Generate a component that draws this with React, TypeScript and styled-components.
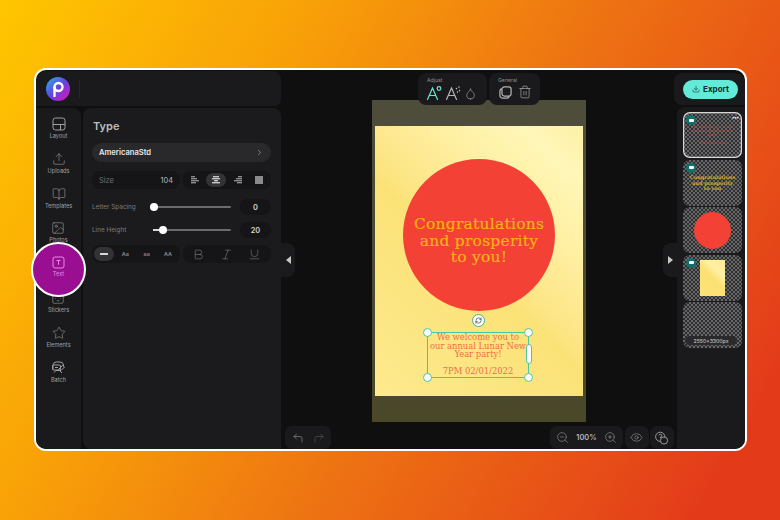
import React from "react";
import styled, { createGlobalStyle } from "styled-components";
import { Upload, BookOpen, Image, Sticker, Star, ChevronRight, Trash2, Droplet, ZoomIn, ZoomOut, Eye, RefreshCw, Download, CornerUpLeft, CornerUpRight, Bold, Italic, Underline } from "lucide-react";

const Global = createGlobalStyle`
  html, body { margin: 0; padding: 0; }
  body { font-family: "Inter", "Liberation Sans", sans-serif; }
  * { box-sizing: border-box; }
`;

const Stage = styled.div`
  width: 780px; height: 520px; padding: 68px 0 0 34px; overflow: hidden;
  background: linear-gradient(120deg, #ffc600 0%, #f89f08 30%, #ee7512 55%, #e33b1a 92%);
`;
const Win = styled.div`
  width: 713px; height: 383px; border: 2px solid #fff; border-radius: 12px; background: #0f0f10;
  display: grid; grid-template-columns: 245px 393px 1fr; position: relative;
`;
const LeftCol = styled.div`
  display: flex; flex-direction: column; gap: 2px; padding-top: 1px;
`;
const TopBar = styled.div`
  height: 35px; background: #1a1a1c; border-radius: 10px 8px 6px 0; display: flex; align-items: center; padding-left: 10px; gap: 9px;
`;
const Logo = styled.div`
  width: 24px; height: 24px; border-radius: 50%; display: flex; align-items: center; justify-content: center;
  background: linear-gradient(135deg, #1fb8ea 0%, #6a3fe0 50%, #e414b0 100%);
`;
const Divider = styled.div`width: 1px; height: 18px; background: #26262a;`;
const Lower = styled.div`flex: 1; display: flex; gap: 2px; min-height: 0;`;
const Sidebar = styled.div`
  width: 45px; background: #1a1a1c; border-radius: 0 8px 0 10px; display: flex; flex-direction: column; align-items: center; padding-top: 9px; gap: 8.75px;
`;
const NavItem = styled.div`
  position: relative; width: 45px; height: 26px; display: flex; flex-direction: column; align-items: center; gap: 2px;
  color: #a0a0a0; font-size: 5.6px; line-height: 7px; font-weight: 400;
  svg { display: block; flex: none; }
`;
const Spotlight = styled.div`
  position: absolute; left: -5px; top: -14px; width: 55px; height: 55px; border-radius: 50%;
  background: #9a0f92; border: 2px solid #fff; z-index: 3;
`;
const NavContent = styled.div<{ $active?: boolean }>`
  display: flex; flex-direction: column; align-items: center; gap: 2px; position: relative;
  z-index: ${p => (p.$active ? 4 : 1)};
  color: ${p => (p.$active ? "#e58be0" : "inherit")};
`;
const Panel = styled.div`
  width: 198px; background: #1b1b1d; border-radius: 8px 8px 0 8px; padding: 11px 10px 0 9px; display: flex; flex-direction: column;
`;
const Heading = styled.div`font-size: 11px; line-height: 14px; font-weight: 600; color: #bdbdbd; margin-bottom: 10px; padding-left: 1px;`;
const FontRow = styled.div`
  height: 19px; border-radius: 10px; background: #29292b; color: #e8e8e8; font-size: 7.6px; font-weight: 600;
  display: flex; align-items: center; justify-content: space-between; padding: 0 7px; margin-bottom: 9px;
`;
const TwoBoxes = styled.div`display: grid; grid-template-columns: 88px 88px; gap: 3px;`;
const Box = styled.div`
  height: 18px; border-radius: 8px; background: #151517; display: flex; align-items: center; justify-content: space-between; padding: 0 7px;
  color: #6f6f6f; font-size: 7.4px;
`;
const SizeValue = styled.span`color: #b5b5b5;`;
const Seg = styled.div<{ $on?: boolean }>`
  width: 20px; height: 14px; border-radius: 7px; display: flex; align-items: center; justify-content: center;
  background: ${p => (p.$on ? "#333336" : "transparent")}; color: ${p => (p.$on ? "#c8c8c8" : "#8a8a8a")};
  font-size: 5.4px; font-weight: 600;
`;
const DashMark = styled.span`width: 8px; height: 1.4px; background: #d8d8d8;`;
const SegBox = styled(Box)`padding: 0 2px;`;
const SliderRow = styled.div<{ $mt: number }>`
  display: grid; grid-template-columns: 61px 78px 31px; align-items: center; height: 16px; margin-top: ${p => p.$mt}px;
  color: #7a7a7a; font-size: 6.4px;
`;
const Track = styled.div`position: relative; height: 2px; background: #6b6b6b; border-radius: 1px;`;
const TrackFill = styled.div`position: absolute; left: 0; top: 0; height: 2px; background: #d8d8d8;`;
const Thumb = styled.div`
  position: absolute; top: -3px; width: 8px; height: 8px; border-radius: 50%; background: #fff; margin-left: -4px;
`;
const ValuePill = styled.div`
  margin-left: 9px; width: 31px; height: 16px; border-radius: 8px; background: #151517; color: #d2d2d2; font-size: 7.4px; font-weight: 600;
  display: flex; align-items: center; justify-content: center;
`;
const RowLast = styled(TwoBoxes)`margin-top: 7px;`;
const Center = styled.div`
  position: relative; display: flex; flex-direction: column; align-items: center; padding-top: 3px; padding-left: 3px;
`;
const ToolsRow = styled.div`
  display: flex; gap: 2px; height: 32px; margin-bottom: -5px; position: relative; z-index: 2;
`;
const ToolGroup = styled.div<{ $w: number }>`
  width: ${p => p.$w}px; height: 32px; background: #1a1a1c; border-radius: 8px; padding: 4px 0 0 9px; color: #8e8e8e;
  font-size: 5.2px; line-height: 6px;
`;
const ToolIcons = styled.div<{ $gap: number; $ml: number }>`
  display: flex; gap: ${p => p.$gap}px; align-items: center; margin-top: 2px; margin-left: ${p => p.$ml}px;
`;
const Artboard = styled.div`
  width: 214px; height: 322px; padding-top: 26px; display: flex; justify-content: center;
  background: linear-gradient(180deg, #4e4d3b, #4a4829);
`;
const Page = styled.div`
  width: 208px; height: 270px; display: flex; flex-direction: column; align-items: center; padding-top: 33px;
  background: linear-gradient(43deg, #fdea8e 0%, #fbe277 47%, #fde688 54%, #fff0a4 72%, #fff7b8 88%, #fef1a6 100%);
`;
const Circle = styled.div`
  width: 152px; height: 152px; border-radius: 50%; background: #f34135; flex: none; display: flex; flex-direction: column; align-items: center; justify-content: center;
  color: #fbb215; font-family: "DejaVu Serif", serif; font-size: 15.4px; line-height: 16.5px; letter-spacing: 0.3px; text-align: center; padding-top: 12px;
  -webkit-text-stroke: 0.2px #fbb215;
`;
const Rotate = styled.div`
  width: 13px; height: 13px; border-radius: 50%; background: #fff; border: 1.5px solid #36b6a4; margin: 3px 2px 0 0; display: flex; align-items: center; justify-content: center; color: #222; flex: none;
`;
const TextBox = styled.div`
  position: relative; width: 102px; height: 46px; margin: 5px 2px 0 0; border: 1.5px solid #4cc4a6; flex: none;
  color: #ec6e4a; font-family: "DejaVu Serif", serif; font-size: 8.4px; line-height: 8.6px; text-align: center; white-space: nowrap;
`;
const Handle = styled.div<{ $x: "left" | "right"; $y: "top" | "bottom" }>`
  position: absolute; ${p => p.$x}: -5.2px; ${p => p.$y}: -5.2px; width: 9px; height: 9px; border-radius: 50%; background: #fff; border: 1.6px solid #4cc4a6;
`;
const SideGrip = styled.div`
  position: absolute; right: -3.5px; top: 11px; width: 6px; height: 20px; border-radius: 3px; background: #fff; border: 1.5px solid #4cc4a6;
`;
const BottomBar = styled.div`
  align-self: stretch; margin-top: 4px; margin-left: -3px; display: flex; justify-content: space-between; padding-left: 4px;
`;
const BottomGroup = styled.div`display: flex; gap: 1.5px;`;
const BottomChip = styled.div<{ $w: number }>`
  width: ${p => p.$w}px; height: 23px; background: #1a1a1c; border-radius: 7px; display: flex; align-items: center; justify-content: space-around; color: #9a9a9a; font-size: 7.4px; font-weight: 600; padding: 0 2px;
`;
const ZoomLabel = styled.span`color: #b5b5b5;`;
const Collapse = styled.div<{ $side: "left" | "right" }>`
  position: absolute; ${p => p.$side}: ${p => (p.$side === "left" ? "0" : "-3px")}; top: 173px; width: 14px; height: 34px; background: #1a1a1c;
  border-radius: ${p => (p.$side === "left" ? "0 8px 8px 0" : "8px 0 0 8px")}; display: flex; align-items: center; justify-content: center;
`;
const Arrow = styled.div<{ $dir: "left" | "right" }>`
  width: 0; height: 0; border-top: 4px solid transparent; border-bottom: 4px solid transparent;
  ${p => (p.$dir === "left" ? "border-right: 5px solid #c8c8c8;" : "border-left: 5px solid #c8c8c8;")}
`;
const RightCol = styled.div`display: flex; flex-direction: column; align-items: flex-end; gap: 2px; padding-top: 3px;`;
const ExportBar = styled.div`
  width: 71px; height: 32px; background: #1a1a1c; border-radius: 8px 10px 0 8px; display: flex; align-items: center; padding-left: 9px;
`;
const ExportBtn = styled.div`
  width: 55px; height: 19px; border-radius: 10px; background: #62ebd9; color: #15282a; font-size: 8px; font-weight: 700;
  display: flex; align-items: center; justify-content: center; gap: 3px;
`;
const Thumbs = styled.div`
  width: 68px; flex: 1; background: #1a1a1c; border-radius: 8px 0 10px 0; padding: 5px 3px 0 6px; display: flex; flex-direction: column; gap: 1.5px;
`;
const Thumb2 = styled.div<{ $sel?: boolean }>`
  position: relative; height: 46px; border-radius: 7px; overflow: hidden; flex: none; display: flex; align-items: center; justify-content: center; text-align: center;
  background: repeating-conic-gradient(#666 0 25%, #2f2f31 0 50%) 0 0 / 4px 4px;
  ${p => p.$sel && "box-shadow: inset 0 0 0 1.2px #d8d8d8;"}
`;
const Badge = styled.div`
  position: absolute; left: 3px; top: 3px; width: 10px; height: 10px; border-radius: 50%; background: #136f6c; display: flex; align-items: center; justify-content: center;
  &::after { content: ""; width: 5px; height: 3px; border-radius: 1px; background: #fff; }
`;
const Dots = styled.div`
  position: absolute; right: 3px; top: 2px; color: #fff; font-size: 5px; line-height: 6px; font-weight: 700;
`;
const TinyRed = styled.div`color: #c04a40; font-family: "DejaVu Serif", serif; font-size: 3.4px; line-height: 4px; width: 50px;`;
const TinyYellow = styled.div`color: #d6a82a; font-family: "DejaVu Serif", serif; font-size: 5px; line-height: 5.4px; font-weight: 700; margin-top: 2px; white-space: nowrap;`;
const MiniCircle = styled.div`width: 37px; height: 37px; border-radius: 50%; background: #f34135;`;
const MiniPage = styled.div`width: 25px; height: 36px; background: linear-gradient(43deg, #fbe27a, #fbe173 50%, #fff0a4 70%, #fdea90);`;
const SizePill = styled.div`
  position: absolute; left: 2px; right: 5px; bottom: 3px; height: 9px; border-radius: 5px; background: #2a2a2c; color: #d0d0d0; font-size: 5.2px; display: flex; align-items: center; justify-content: center;
`;

const LayoutIcon = () => (
  <svg width="14" height="14" viewBox="0 0 14 14" fill="none" stroke="currentColor" strokeWidth="1">
    <rect x="1" y="1" width="12" height="12" rx="2.5" /><path d="M1 7.5h12M8.5 7.5V13" />
  </svg>
);
const TextIcon = () => (
  <svg width="13" height="13" viewBox="0 0 13 13" fill="none" stroke="currentColor" strokeWidth="1">
    <rect x="1" y="1" width="11" height="11" rx="2" /><path d="M4.5 4.5h4M6.5 4.5v4.3" />
  </svg>
);
const BatchIcon = () => (
  <svg width="15" height="15" viewBox="0 0 15 15" fill="none" stroke="currentColor" strokeWidth="1">
    <path d="M2 9.5V5a3.5 3.5 0 0 1 3.5-3H9a3.5 3.5 0 0 1 3.5 3v1" />
    <rect x="1.5" y="5" width="8" height="5" rx="1" /><path d="M3 12.5l2-2h5l3.5-3.5-2-1.5-5 5" /><path d="M4 7.5h3M9 11l2 2" />
  </svg>
);
const AlignIcon = ({ kind }: { kind: "l" | "c" | "r" }) => {
  const rows: [number, number][] = kind === "l" ? [[1, 4], [1, 6], [1, 8], [1, 5]] : kind === "c" ? [[2, 6], [1, 8], [3, 4], [1, 8]] : [[5, 4], [3, 6], [1, 8], [4, 5]];
  return (
    <svg width="10" height="10" viewBox="0 0 10 10" fill="currentColor">
      {rows.map(([x, w], i) => <rect key={i} x={x} y={1 + i * 2} width={w} height={1.4} />)}
    </svg>
  );
};
const SolidAlign = () => (
  <svg width="10" height="10" viewBox="0 0 10 10" fill="currentColor"><rect x="1" y="1" width="8" height="8" /></svg>
);
const AdjustA = ({ color, extra }: { color: string; extra: "ring" | "spark" }) => (
  <svg width="16" height="16" viewBox="0 0 16 16" fill="none" stroke={color} strokeWidth="1.2" strokeLinecap="round">
    <path d="M1.5 14.5L6.5 3l5 11.5M3.3 10.5h6.4" />
    {extra === "ring" ? <circle cx="13" cy="3.5" r="1.8" /> : <path d="M11.5 3.5v.1M14 2v.1M14.5 5.5v.1M12.5 7v.1" strokeWidth="1.6" />}
  </svg>
);
const DuplicateIcon = () => (
  <svg width="13" height="13" viewBox="0 0 14 14" fill="none" stroke="#b5b5b5" strokeWidth="1.3">
    <rect x="3.2" y="1" width="9.8" height="9.8" rx="2.4" /><path d="M3.2 3A2.4 2.4 0 0 0 1 5.4v5.2A2.4 2.4 0 0 0 3.4 13h5.2A2.4 2.4 0 0 0 11 10.8" />
  </svg>
);
const HelpIcon = () => (
  <svg width="14" height="14" viewBox="0 0 14 14" fill="none" stroke="currentColor" strokeWidth="1">
    <path d="M9.8 6.2A4.6 4.6 0 1 0 5.2 10.4" /><circle cx="9" cy="9.5" r="3.6" /><path d="M4 4.4A1.4 1.4 0 1 1 5.4 6v1M5.4 8.3v.1" />
  </svg>
);

const nav = [
  { label: "Layout", icon: <LayoutIcon /> },
  { label: "Uploads", icon: <Upload size={14} strokeWidth={1} /> },
  { label: "Templates", icon: <BookOpen size={14} strokeWidth={1} /> },
  { label: "Photos", icon: <Image size={14} strokeWidth={1} /> },
  { label: "Text", icon: <TextIcon />, active: true },
  { label: "Stickers", icon: <Sticker size={14} strokeWidth={1} /> },
  { label: "Elements", icon: <Star size={14} strokeWidth={1} /> },
  { label: "Batch", icon: <BatchIcon /> },
];

export default function App() {
  return (
    <Stage>
      <Global />
      <Win>
        <LeftCol>
          <TopBar>
            <Logo>
              <svg width="14" height="16" viewBox="0 0 14 16" fill="none" stroke="#fff" strokeWidth="2.4"><circle cx="7.5" cy="6" r="4" /><path d="M3.5 6v9" strokeLinecap="round" /></svg>
            </Logo>
            <Divider />
          </TopBar>
          <Lower>
            <Sidebar>
              {nav.map(n => (
                <NavItem key={n.label}>
                  {n.active && <Spotlight />}
                  <NavContent $active={n.active}>{n.icon}<span>{n.label}</span></NavContent>
                </NavItem>
              ))}
            </Sidebar>
            <Panel>
              <Heading>Type</Heading>
              <FontRow>AmericanaStd<ChevronRight size={9} color="#9a9a9a" /></FontRow>
              <TwoBoxes>
                <Box>Size<SizeValue>104</SizeValue></Box>
                <SegBox>
                  <Seg><AlignIcon kind="l" /></Seg>
                  <Seg $on><AlignIcon kind="c" /></Seg>
                  <Seg><AlignIcon kind="r" /></Seg>
                  <Seg><SolidAlign /></Seg>
                </SegBox>
              </TwoBoxes>
              <SliderRow $mt={10}>
                <span>Letter Spacing</span>
                <Track><Thumb style={{ left: "1%" }} /></Track>
                <ValuePill>0</ValuePill>
              </SliderRow>
              <SliderRow $mt={7}>
                <span>Line Height</span>
                <Track><TrackFill style={{ width: "12%" }} /><Thumb style={{ left: "13%" }} /></Track>
                <ValuePill>20</ValuePill>
              </SliderRow>
              <RowLast>
                <SegBox>
                  <Seg $on><DashMark /></Seg><Seg>Aa</Seg><Seg>aa</Seg><Seg>AA</Seg>
                </SegBox>
                <Box>
                  <Bold size={13} strokeWidth={1} color="#8a8a8a" style={{ marginLeft: 2 }} />
                  <Italic size={13} strokeWidth={1} color="#8a8a8a" />
                  <Underline size={13} strokeWidth={1} color="#8a8a8a" style={{ marginRight: 3 }} />
                </Box>
              </RowLast>
            </Panel>
          </Lower>
        </LeftCol>

        <Center>
          <Collapse $side="left"><Arrow $dir="left" /></Collapse>
          <ToolsRow>
            <ToolGroup $w={69}>
              Adjust
              <ToolIcons $gap={3} $ml={-1}>
                <AdjustA color="#6fe3cf" extra="ring" />
                <AdjustA color="#b5b5b5" extra="spark" />
                <Droplet size={13} strokeWidth={1.1} color="#b5b5b5" />
              </ToolIcons>
            </ToolGroup>
            <ToolGroup $w={51}>
              General
              <ToolIcons $gap={6} $ml={1}>
                <DuplicateIcon />
                <Trash2 size={14} strokeWidth={1.1} color="#b5b5b5" />
              </ToolIcons>
            </ToolGroup>
          </ToolsRow>
          <Artboard>
            <Page>
              <Circle>
                <span>Congratulations</span>
                <span>and prosperity</span>
                <span>to you!</span>
              </Circle>
              <Rotate><RefreshCw size={7} strokeWidth={2} /></Rotate>
              <TextBox>
                We welcome you to<br />our annual Lunar New<br />Year party!<br /><br />7PM 02/01/2022
                <Handle $x="left" $y="top" /><Handle $x="right" $y="top" />
                <Handle $x="left" $y="bottom" /><Handle $x="right" $y="bottom" />
                <SideGrip />
              </TextBox>
            </Page>
          </Artboard>
          <BottomBar>
            <BottomChip $w={46}>
              <CornerUpLeft size={12} strokeWidth={1.3} color="#8f8f8f" />
              <CornerUpRight size={12} strokeWidth={1.3} color="#555" />
            </BottomChip>
            <BottomGroup>
              <BottomChip $w={73}>
                <ZoomOut size={13} strokeWidth={1.1} /><ZoomLabel>100%</ZoomLabel><ZoomIn size={13} strokeWidth={1.1} />
              </BottomChip>
              <BottomChip $w={24}><Eye size={13} strokeWidth={1.1} /></BottomChip>
              <BottomChip $w={24}><HelpIcon /></BottomChip>
            </BottomGroup>
          </BottomBar>
          <Collapse $side="right"><Arrow $dir="right" /></Collapse>
        </Center>

        <RightCol>
          <ExportBar>
            <ExportBtn><Download size={8} strokeWidth={1.6} />Export</ExportBtn>
          </ExportBar>
          <Thumbs>
            <Thumb2 $sel>
              <Badge /><Dots>•••</Dots>
              <TinyRed>We welcome you to our annual Lunar New Year party!<br /><br />7PM 02/01/2022</TinyRed>
            </Thumb2>
            <Thumb2>
              <Badge />
              <TinyYellow>Congratulations<br />and prosperity<br />to you</TinyYellow>
            </Thumb2>
            <Thumb2><MiniCircle /></Thumb2>
            <Thumb2><Badge /><MiniPage /></Thumb2>
            <Thumb2><SizePill>2550x3300px</SizePill></Thumb2>
          </Thumbs>
        </RightCol>
      </Win>
    </Stage>
  );
}
